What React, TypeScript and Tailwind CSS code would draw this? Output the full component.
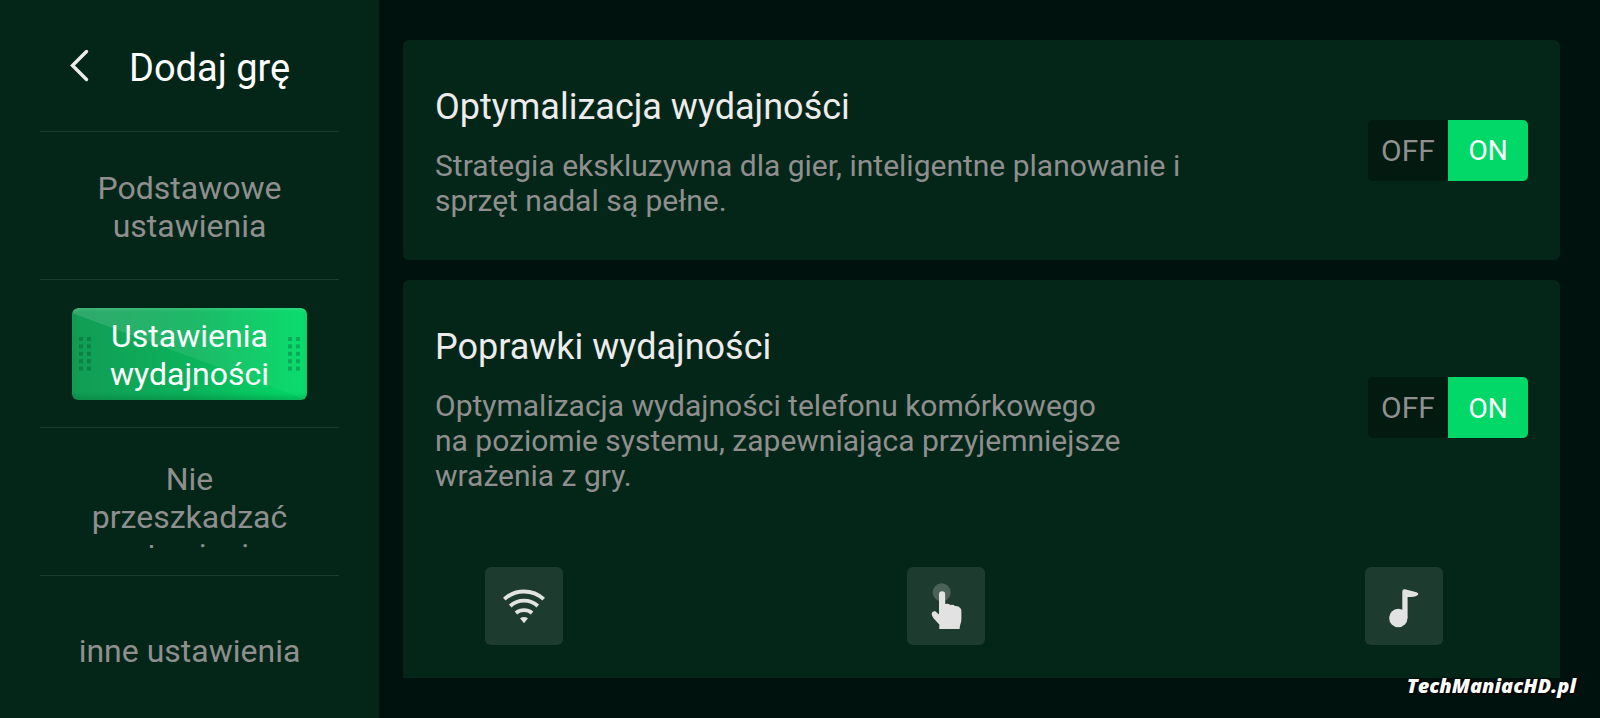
import { useState } from 'react';
import type { ReactNode } from 'react';
import clsx from 'clsx';

const menuItems = [
  { id: 'basic', name: 'Podstawowe ustawienia' },
  { id: 'performance', name: 'Ustawienia wydajności' },
  { id: 'dnd', name: 'Nie przeszkadzać ustawienia' },
  { id: 'other', name: 'inne ustawienia' },
];

const dotRows = [0, 1, 2, 3, 4];

function GripDots() {
  return (
    <svg width="12" height="34" viewBox="0 0 12 34" fill="#064d2b" fillOpacity="0.35" aria-hidden="true">
      {dotRows.map((row) => (
        <g key={row}>
          <rect x="0" y={row * 7.4} width="4" height="4" />
          <rect x="8" y={row * 7.4} width="4" height="4" />
        </g>
      ))}
    </svg>
  );
}

function ActiveBackground() {
  return (
    <span className="absolute inset-0 flex items-center justify-between overflow-hidden rounded-md bg-linear-to-r from-[#119c55] via-[#0bb25b] to-[#02dc69] px-[7px] shadow-[inset_0_2px_3px_rgba(255,255,255,0.12),inset_0_-4px_4px_rgba(0,90,40,0.25)]">
      <svg
        className="absolute inset-0 h-full w-full"
        viewBox="0 0 236 92"
        preserveAspectRatio="none"
        aria-hidden="true"
      >
        <defs>
          <linearGradient id="shine" x1="0" y1="0" x2="1" y2="0">
            <stop offset="0" stopColor="#ffffff" stopOpacity="0.13" />
            <stop offset="1" stopColor="#ffffff" stopOpacity="0.03" />
          </linearGradient>
        </defs>
        <path d="M0 5V0H236V92Z" fill="url(#shine)" />
      </svg>
      <GripDots />
      <GripDots />
    </span>
  );
}

function WifiIcon() {
  return (
    <svg className="h-full w-full" viewBox="0 0 78 78" fill="none" aria-hidden="true">
      <g stroke="#e2e2e2" strokeWidth="3.8">
        <path d="M19.3 32.2a29 29 0 0 1 39.4 0" />
        <path d="M25.2 39a20.5 20.5 0 0 1 27.6 0" />
        <path d="M30.9 46a13 13 0 0 1 16.2 0" />
      </g>
      <path d="M35 51.3q4-2.4 8 0L39 56.2Z" fill="#e2e2e2" />
    </svg>
  );
}

function TouchIcon() {
  return (
    <svg className="h-full w-full" viewBox="0 0 78 78" aria-hidden="true">
      <circle cx="34.7" cy="25.3" r="9" fill="#ffffff" fillOpacity="0.2" />
      <path
        d="M32 27.4a3.1 3.1 0 0 1 6.2 0V37q3.2-1 5 1 3.2-.9 4.8 1.1 3.8-.3 5.600 2.3.8 1.2.8 3V52q0 3-1.1 5.5-.5 1.6-.7 4.6H32.3v-4.6L26.5 51.200q-1.6-2.4-1.8-4.2.4-3.2 3.6-2.7L32 47.400Z"
        fill="#e2e2e2"
      />
    </svg>
  );
}

function NoteIcon() {
  return (
    <svg className="h-full w-full" viewBox="0 0 78 78" fill="#e2e2e2" aria-hidden="true">
      <circle cx="33.3" cy="51" r="9.2" />
      <path d="M37.3 24.3q.2-2.3 2.7-2L51.5 25.3q3.4 1.2.6 3.2-2.4 1.6-9.5 1.6V51H37.3Z" />
    </svg>
  );
}

function Toggle({ label, checked, onChange }: { label: string; checked: boolean; onChange: () => void }) {
  return (
    <button
      type="button"
      role="switch"
      aria-checked={checked}
      aria-label={label}
      onClick={onChange}
      className="mb-1 flex h-[61px] w-[160px] shrink-0 overflow-hidden rounded-[5px] bg-[#021a10]"
    >
      <span
        className={clsx(
          'flex h-full flex-1 items-center justify-center',
          checked ? 'text-[30px] text-[#8f8f8f]' : 'bg-[#02d868] text-[28px] text-white',
        )}
      >
        OFF
      </span>
      <span
        className={clsx(
          'flex h-full flex-1 items-center justify-center pt-0.5',
          checked ? 'bg-[#02d868] text-[28px] text-white' : 'text-[30px] text-[#8f8f8f]',
        )}
      >
        ON
      </span>
    </button>
  );
}

type CardProps = {
  title: string;
  description: string;
  textWidth: string;
  children?: ReactNode;
};

function SettingCard({ title, description, textWidth, children }: CardProps) {
  const [enabled, setEnabled] = useState(true);

  return (
    <section className="shrink-0 rounded-md bg-[#042618]">
      <div className="flex items-center justify-between px-8 pt-[46px] pb-[42px]">
        <div>
          <h2 className="text-[36px] leading-[42px] text-[#ececec]">{title}</h2>
          <p className={clsx('mt-5 text-[30px] leading-[35px] text-[#8f8f8f]', textWidth)}>
            {description}
          </p>
        </div>
        <Toggle label={title} checked={enabled} onChange={() => setEnabled(!enabled)} />
      </div>
      {children}
    </section>
  );
}

function Sidebar() {
  const [active, setActive] = useState('performance');

  return (
    <aside className="w-[379px] shrink-0 overflow-hidden bg-[#042618] px-10">
      <header className="flex h-[132px] items-center border-b border-[#1e3b2f] pl-7">
        <button type="button" aria-label="Wstecz" className="text-[#ececec]">
          <svg width="24" height="34" viewBox="0 0 24 34" fill="none" aria-hidden="true">
            <path d="M18.5 2.5 4.5 16.5l14 14" stroke="currentColor" strokeWidth="3.4" strokeLinecap="round" />
          </svg>
        </button>
        <h1 className="pt-1 pl-[37px] text-[38px] leading-[44px] text-white">Dodaj grę</h1>
      </header>
      <nav>
        <ul>
          {menuItems.map((item) => (
            <li
              key={item.id}
              className="flex h-[148px] items-center justify-center border-b border-[#1e3b2f] last:border-b-0"
            >
              <button
                type="button"
                onClick={() => setActive(item.id)}
                className={clsx(
                  'relative flex h-[92px] w-[235px] justify-center overflow-hidden rounded-md px-1 text-[32px] leading-[38px]',
                  item.id === 'dnd' ? 'items-start pt-1' : 'items-center pt-0.5',
                  item.id === active ? 'text-white' : 'text-[#8f8f8f]',
                )}
              >
                {item.id === active && <ActiveBackground />}
                <span className={clsx('relative', item.id !== 'other' && 'w-[210px]')}>{item.name}</span>
              </button>
            </li>
          ))}
        </ul>
      </nav>
    </aside>
  );
}

const tiles = [
  { name: 'Sieć', icon: <WifiIcon /> },
  { name: 'Dotyk', icon: <TouchIcon /> },
  { name: 'Dźwięk', icon: <NoteIcon /> },
];

export default function App() {
  return (
    <div className="relative flex h-screen overflow-hidden bg-[#00120d] font-['Roboto',sans-serif]">
      <Sidebar />
      <main className="min-w-0 flex-1 py-10 pr-10 pl-6">
        <div className="flex h-full flex-col gap-5 overflow-hidden">
          <SettingCard
            title="Optymalizacja wydajności"
            description="Strategia ekskluzywna dla gier, inteligentne planowanie i sprzęt nadal są pełne."
            textWidth="max-w-[760px]"
          />
          <SettingCard
            title="Poprawki wydajności"
            description="Optymalizacja wydajności telefonu komórkowego na poziomie systemu, zapewniająca przyjemniejsze wrażenia z gry."
            textWidth="max-w-[690px]"
          >
            <div className="grid grid-cols-[12fr_13fr_78px] pt-8 pr-[117px] pb-20 pl-[82px]">
              {tiles.map((tile) => (
                <button
                  key={tile.name}
                  type="button"
                  aria-label={tile.name}
                  className="size-[78px] rounded-md bg-[#1e3b2f]"
                >
                  {tile.icon}
                </button>
              ))}
            </div>
          </SettingCard>
        </div>
      </main>
      <p className="absolute right-6 bottom-5 font-['Open_Sans','Roboto',sans-serif] text-[20px] leading-6 font-extrabold text-white italic [text-shadow:0_0_3px_#000,1px_1px_2px_#000]">
        TechManiacHD.pl
      </p>
    </div>
  );
}
